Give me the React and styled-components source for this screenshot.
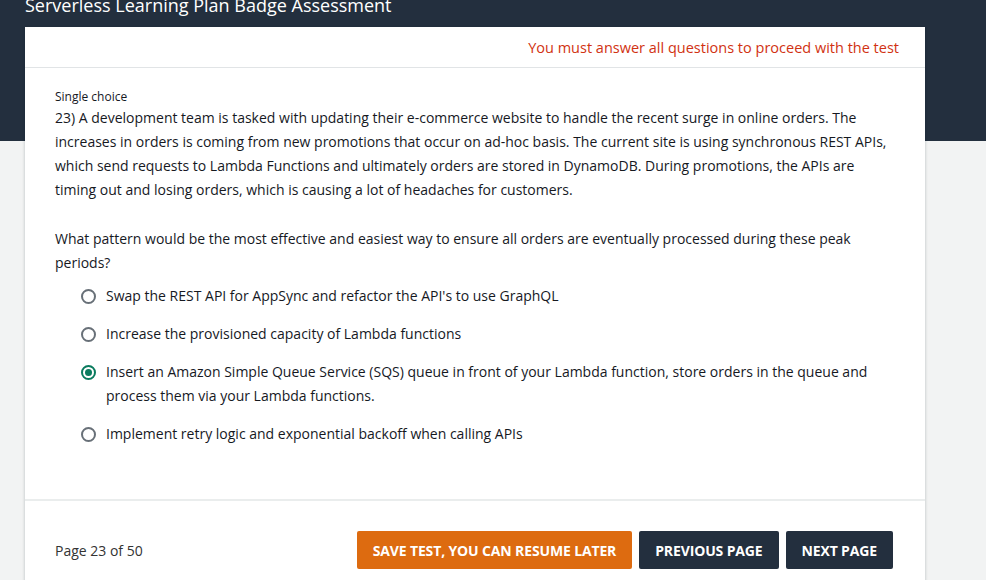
import React, { useState } from "react";
import styled, { createGlobalStyle } from "styled-components";

const GlobalStyle = createGlobalStyle`
  body {
    margin: 0;
    font-family: "Open Sans", "Noto Sans", sans-serif;
    background: #f2f3f3;
    color: #16191f;
  }
`;

const Page = styled.div`
  min-height: 580px;
  padding: 0 61px 0 25px;
  background: linear-gradient(#232f3e 0, #232f3e 141px, #f2f3f3 141px);
  overflow: hidden;
`;

const Title = styled.h1`
  margin: -7px 0 10px;
  font-size: 18px;
  line-height: 24px;
  font-weight: 400;
  color: #fff;
`;

const Card = styled.div`
  width: 900px;
  background: #fff;
  box-shadow: 0 1px 3px rgba(0, 28, 36, 0.25);
`;

const TopBar = styled.div`
  height: 40px;
  display: flex;
  align-items: center;
  justify-content: flex-end;
  padding: 0 26px 0 30px;
  border-bottom: 1px solid #e1e4e6;
`;

const Warning = styled.span`
  font-size: 14.5px;
  color: #d13212;
`;

const Body = styled.div`
  padding: 20px 30px 53px;
`;

const Kind = styled.div`
  font-size: 12px;
  line-height: 18px;
  color: #16191f;
`;

const Paragraph = styled.p`
  margin: 0 0 ${(p) => p.$gap || 0}px;
  font-size: 14px;
  line-height: 24px;
  color: #16191f;
`;

const Options = styled.div`
  display: flex;
  flex-direction: column;
  gap: 14px;
  margin-top: 9px;
  padding-left: 26px;
`;

const Option = styled.label`
  display: flex;
  align-items: flex-start;
  gap: 10px;
  font-size: 14px;
  line-height: 24px;
  cursor: pointer;
`;

const Radio = styled.span`
  flex: none;
  box-sizing: border-box;
  width: 15px;
  height: 15px;
  margin-top: 5px;
  border-radius: 50%;
  border: 2px solid ${(p) => (p.$checked ? "#0a7b5e" : "#687078")};
  display: flex;
  align-items: center;
  justify-content: center;
  &::after {
    content: "";
    width: 7px;
    height: 7px;
    border-radius: 50%;
    background: ${(p) => (p.$checked ? "#0a7b5e" : "transparent")};
  }
`;

const Footer = styled.div`
  display: flex;
  align-items: center;
  justify-content: space-between;
  padding: 30px 32px 30px 30px;
  border-top: 2px solid #eaeded;
`;

const PageInfo = styled.span`
  font-size: 14px;
  color: #333;
`;

const Buttons = styled.div`
  display: flex;
  gap: 7px;
`;

const Button = styled.button`
  height: 38px;
  padding: 0 16px;
  border: none;
  border-radius: 2px;
  background: ${(p) => (p.$primary ? "#dd6b10" : "#232f3e")};
  color: #fff;
  font-family: "Open Sans", sans-serif;
  font-size: 14px;
  font-weight: 700;
  letter-spacing: -0.14px;
  text-transform: uppercase;
  cursor: pointer;
`;

const answers = [
  "Swap the REST API for AppSync and refactor the API's to use GraphQL",
  "Increase the provisioned capacity of Lambda functions",
  "Insert an Amazon Simple Queue Service (SQS) queue in front of your Lambda function, store orders in the queue and process them via your Lambda functions.",
  "Implement retry logic and exponential backoff when calling APIs",
];

export default function App() {
  const [selected, setSelected] = useState(2);
  return (
    <Page>
      <GlobalStyle />
      <Title>Serverless Learning Plan Badge Assessment</Title>
      <Card>
        <TopBar>
          <Warning>You must answer all questions to proceed with the test</Warning>
        </TopBar>
        <Body>
          <Kind>Single choice</Kind>
          <Paragraph $gap={25}>
            23) A development team is tasked with updating their e-commerce
            website to handle the recent surge in online orders. The increases
            in orders is coming from new promotions that occur on ad-hoc basis.
            The current site is using synchronous REST APIs, which send
            requests to Lambda Functions and ultimately orders are stored in
            DynamoDB. During promotions, the APIs are timing out and losing
            orders, which is causing a lot of headaches for customers.
          </Paragraph>
          <Paragraph>
            What pattern would be the most effective and easiest way to ensure
            all orders are eventually processed during these peak periods?
          </Paragraph>
          <Options>
            {answers.map((a, i) => (
              <Option key={i} onClick={() => setSelected(i)}>
                <Radio $checked={selected === i} />
                <span>{a}</span>
              </Option>
            ))}
          </Options>
        </Body>
        <Footer>
          <PageInfo>Page 23 of 50</PageInfo>
          <Buttons>
            <Button $primary>Save test, you can resume later</Button>
            <Button>Previous page</Button>
            <Button>Next page</Button>
          </Buttons>
        </Footer>
      </Card>
    </Page>
  );
}
